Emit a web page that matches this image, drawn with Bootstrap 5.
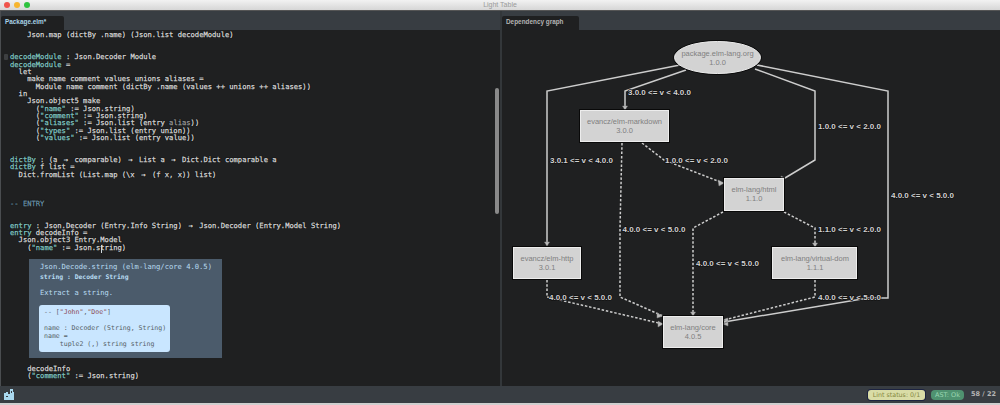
<!DOCTYPE html>
<html lang="en">
<head>
<meta charset="utf-8">
<title>Light Table</title>
<link rel="stylesheet" href="https://cdn.jsdelivr.net/npm/bootstrap@5.3.0/dist/css/bootstrap.min.css">
<style>
html,body{height:405px;overflow:hidden;background:#cfcfcf}
.app{height:405px}
.titlebar{height:11px;background:linear-gradient(#f2f2f2,#d6d6d6);border-bottom:1px solid #555;color:#9a9a9a;font:7px/10px "Liberation Sans",sans-serif}
.dot{width:6px;height:6px;border-radius:50%}
.dot-r{background:#f0544c}.dot-y{background:#f7b52f}.dot-g{background:#2ec23f}
.lights{left:4px;top:2px;gap:4px}
.pane{width:500px;background:#1f2021}
.pane-l{border-left:1px solid #4a4d50}
.pane-r{border-left:2px solid #33373a}
.tabbar{height:19px;background:#383d42;flex:none;padding-top:5px}
.tabx{height:14px;background:#1f2021;border-radius:2px 2px 0 0;font:bold 6.400px/12px "Liberation Sans",sans-serif;padding-left:4px;white-space:nowrap}
.tabx-a{width:63px;color:#a9d3e6}
.tabx-b{width:77px;color:#b4b4b4}
.codewrap{flex:1;min-height:0;padding:1.300px 0 0 9px}
.code{margin:0;overflow:visible;font:7.150px/7.330px "DejaVu Sans Mono",monospace;color:#d8d8d8;-webkit-text-stroke:.25px #d8d8d8;text-shadow:0 0 1px #000,0 0 1px #000}
.fn,.st{color:#84c9c5;-webkit-text-stroke-color:#84c9c5}
.cm{color:#6d93a8;-webkit-text-stroke-color:#6d93a8}
.dim{color:#9a9a9a;-webkit-text-stroke-color:#9a9a9a}
.arw{display:inline-block;width:2ch;text-align:center}
.gutmark{left:3px;top:24px;width:4px;height:6px;background:#3d3f41;border-radius:1px}
.sbar{left:494px;top:77px;width:4px;height:126px;background:#8a8a8a;border-radius:2px}
.cursor{left:100px;top:215px;width:1px;height:8px;background:#cfd8dc}
.hint{margin:7.500px 0 7px 19px;width:193px;height:99px;background:#4b5b6b;padding:2.500px 0 0 11px;font:7.150px/11px "DejaVu Sans Mono",monospace;color:#b8dcf2}
.hint-sub{font-weight:700;line-height:11px;font-size:6.400px}
.hint-txt{margin-top:4px;line-height:11px}
.hint-box{margin:7px 0 0 -1px;width:131px;height:47px;background:#c9e6ff;border-radius:3px;padding:3px 0 0 5px;color:#555f66}
.hint-code{margin:0;overflow:visible;font:6.550px/8px "DejaVu Sans Mono",monospace}
.hint-str{color:#8a4a55}
.statusbar{height:17px;background:#383d42;flex:none;font:bold 6.500px/1 "DejaVu Sans",sans-serif}
.pillx{height:10px;line-height:10px;border-radius:3px;font-weight:400;text-align:center;font-family:"DejaVu Sans",sans-serif}
.pill-lint{width:57px;background:#d9dca6;color:#85883f;margin-right:6px;box-shadow:0 0 0 1px #1c2340;font-size:6.300px}
.pill-ast{width:33px;background:#4f9270;color:#9ad6b2;margin-right:7px;border-radius:4px;font-size:6.500px}
.pos{color:#b5b5b5;margin-right:5px;width:24px;white-space:nowrap}
.strip{height:2px;background:#cfcfcf;flex:none}
.graph{display:block;width:498px;height:356px}
.nd{fill:#d3d3d3;stroke:#ededed;stroke-width:1}
.ndo{fill:none;stroke:#000;stroke-width:1;opacity:.7}
.ndt{font:7.500px "Liberation Sans",sans-serif;fill:#808080;text-anchor:middle}
.eg{fill:none;stroke:#cdcdcd;stroke-width:1.500;stroke-linejoin:miter}
.eg-d{stroke-dasharray:2.500 1.800}
.ar{fill:#bdbdbd;stroke:#8a8a8a;stroke-width:.5}
.lb{font:bold 8px "Liberation Sans",sans-serif;fill:#d2d2d2;stroke:#111;stroke-width:1.300px;paint-order:stroke}
</style>
</head>
<body>
<div class="app d-flex flex-column">
  <div class="titlebar position-relative text-center">Light Table
    <div class="lights position-absolute d-flex"><span class="dot dot-r"></span><span class="dot dot-y"></span><span class="dot dot-g"></span></div>
  </div>
  <div class="d-flex flex-grow-1" style="min-height:0">
    <section class="pane pane-l d-flex flex-column position-relative overflow-hidden">
      <div class="tabbar"><div class="tabx tabx-a">Package.elm*</div></div>
      <div class="codewrap position-relative">
<pre class="code">    Json.map (dictBy .name) (Json.list decodeModule)


<span class="fn">decodeModule</span> : Json.Decoder Module
<span class="fn">decodeModule</span> =
  let
    make name comment values unions aliases =
      Module name comment (dictBy .name (values ++ unions ++ aliases))
  in
    Json.object5 make
      (<span class="st">"name"</span> := Json.string)
      (<span class="st">"comment"</span> := Json.string)
      (<span class="st">"aliases"</span> := Json.list (entry <span class="dim">alias</span>))
      (<span class="st">"types"</span> := Json.list (entry union))
      (<span class="st">"values"</span> := Json.list (entry value))


<span class="fn">dictBy</span> : (a <span class="arw">→</span> comparable) <span class="arw">→</span> List a <span class="arw">→</span> Dict.Dict comparable a
<span class="fn">dictBy</span> f list =
  Dict.fromList (List.map (\x <span class="arw">→</span> (f x, x)) list)



<span class="cm">-- ENTRY</span>


<span class="fn">entry</span> : Json.Decoder (Entry.Info String) <span class="arw">→</span> Json.Decoder (Entry.Model String)
<span class="fn">entry</span> decodeInfo =
  Json.object3 Entry.Model
    (<span class="st">"name"</span> := Json.string)</pre>
        <div class="hint">
          <div>Json.Decode.string (elm-lang/core 4.0.5)</div>
          <div class="hint-sub">string : Decoder String</div>
          <div class="hint-txt">Extract a string.</div>
          <div class="hint-box"><pre class="hint-code">-- [<span class="hint-str">"John"</span>,<span class="hint-str">"Doe"</span>]

name : Decoder (String, String)
name =
    tuple2 (,) string string</pre></div>
        </div>
<pre class="code">    decodeInfo
    (<span class="st">"comment"</span> := Json.string)</pre>
        <span class="gutmark position-absolute"></span>
        <span class="cursor position-absolute"></span>
      </div>
      <span class="sbar position-absolute"></span>
    </section>
    <section class="pane pane-r d-flex flex-column">
      <div class="tabbar"><div class="tabx tabx-b">Dependency graph</div></div>
      <svg class="graph" viewBox="502 30 498 356" role="img" aria-label="Dependency graph">
        <g class="eg">
          <path d="M680 65 547 91V245"/>
          <path d="M686 70 625 91V109"/>
          <path d="M755 69 815 91V160L785 178"/>
          <path d="M757 65 888 91V298H868L724 322"/>
          <path class="eg-d" d="M622 143 620 228V297L663 316"/>
          <path class="eg-d" d="M642 143 664 160 723 183"/>
          <path class="eg-d" d="M723 212 693 228V315"/>
          <path class="eg-d" d="M784 212 815 228V246"/>
          <path class="eg-d" d="M547 280V297L663 324"/>
          <path class="eg-d" d="M815 280V297L724 320"/>
        </g>
        <g class="ar">
          <path d="M622.500 106h5l-2.500 4z"/>
          <path d="M544.500 242h5l-2.500 4z"/>
          <path d="M812.500 243h5l-2.500 4z"/>
          <path d="M690.500 312h5l-2.500 4z"/>
          <path d="M718 180l6 3-5 3z"/>
          <path d="M781 176l4 2-3 4z"/>
          <path d="M657 313l6 3-6 2z"/>
          <path d="M658 321l5 3-5 3z"/>
          <path d="M728 318l-5 2 5 2z"/>
          <path d="M728 322l-5 2 5 2z"/>
        </g>
        <ellipse class="ndo" cx="717.500" cy="57.500" rx="44" ry="17"/>
        <ellipse class="nd" cx="717.500" cy="57.500" rx="43" ry="16"/>
        <text class="ndt" x="717.500" y="55.500">package.elm-lang.org</text>
        <text class="ndt" x="717.500" y="64.500">1.0.0</text>
        <rect class="ndo" x="579.500" y="109.500" width="90" height="33"/>
        <rect class="nd" x="580.500" y="110.500" width="88" height="31"/>
        <text class="ndt" x="624.500" y="124">evancz/elm-markdown</text>
        <text class="ndt" x="624.500" y="133">3.0.0</text>
        <rect class="ndo" x="723.500" y="177.500" width="61" height="34"/>
        <rect class="nd" x="724.500" y="178.500" width="59" height="32"/>
        <text class="ndt" x="754" y="192">elm-lang/html</text>
        <text class="ndt" x="754" y="201">1.1.0</text>
        <rect class="ndo" x="512.500" y="246.500" width="69" height="33"/>
        <rect class="nd" x="513.500" y="247.500" width="67" height="31"/>
        <text class="ndt" x="547" y="261">evancz/elm-http</text>
        <text class="ndt" x="547" y="270">3.0.1</text>
        <rect class="ndo" x="771.500" y="246.500" width="86" height="33"/>
        <rect class="nd" x="772.500" y="247.500" width="84" height="31"/>
        <text class="ndt" x="815" y="261">elm-lang/virtual-dom</text>
        <text class="ndt" x="815" y="270">1.1.1</text>
        <rect class="ndo" x="662.500" y="315.500" width="61" height="33"/>
        <rect class="nd" x="663.500" y="316.500" width="59" height="31"/>
        <text class="ndt" x="693" y="330">elm-lang/core</text>
        <text class="ndt" x="693" y="339">4.0.5</text>
        <g class="lb">
          <text x="628" y="95">3.0.0 &lt;= v &lt; 4.0.0</text>
          <text x="550" y="163">3.0.1 &lt;= v &lt; 4.0.0</text>
          <text x="665" y="163">1.0.0 &lt;= v &lt; 2.0.0</text>
          <text x="818" y="129">1.0.0 &lt;= v &lt; 2.0.0</text>
          <text x="891" y="198">4.0.0 &lt;= v &lt; 5.0.0</text>
          <text x="622.500" y="232">4.0.0 &lt;= v &lt; 5.0.0</text>
          <text x="696" y="266">4.0.0 &lt;= v &lt; 5.0.0</text>
          <text x="818" y="232">1.1.0 &lt;= v &lt; 2.0.0</text>
          <text x="549" y="300">4.0.0 &lt;= v &lt; 5.0.0</text>
          <text x="818" y="300">4.0.0 &lt;= v &lt; 5.0.0</text>
        </g>
      </svg>
    </section>
  </div>
  <footer class="statusbar d-flex align-items-center">
    <svg class="ms-1" width="10" height="11" viewBox="0 0 10 11" aria-hidden="true"><path fill="#a9d8ee" d="M0 4h2V3h2v2h2V0h3v3h1v8H0z"/><path fill="#383d42" d="M2 7h2v1H2zM7 2h1v2H7z"/></svg>
    <div class="ms-auto d-flex align-items-center">
      <span class="pillx pill-lint">Lint status: 0/1</span>
      <span class="pillx pill-ast">AST: Ok</span>
      <span class="pos">58 / 22</span>
    </div>
  </footer>
  <div class="strip"></div>
</div>
</body>
</html>
